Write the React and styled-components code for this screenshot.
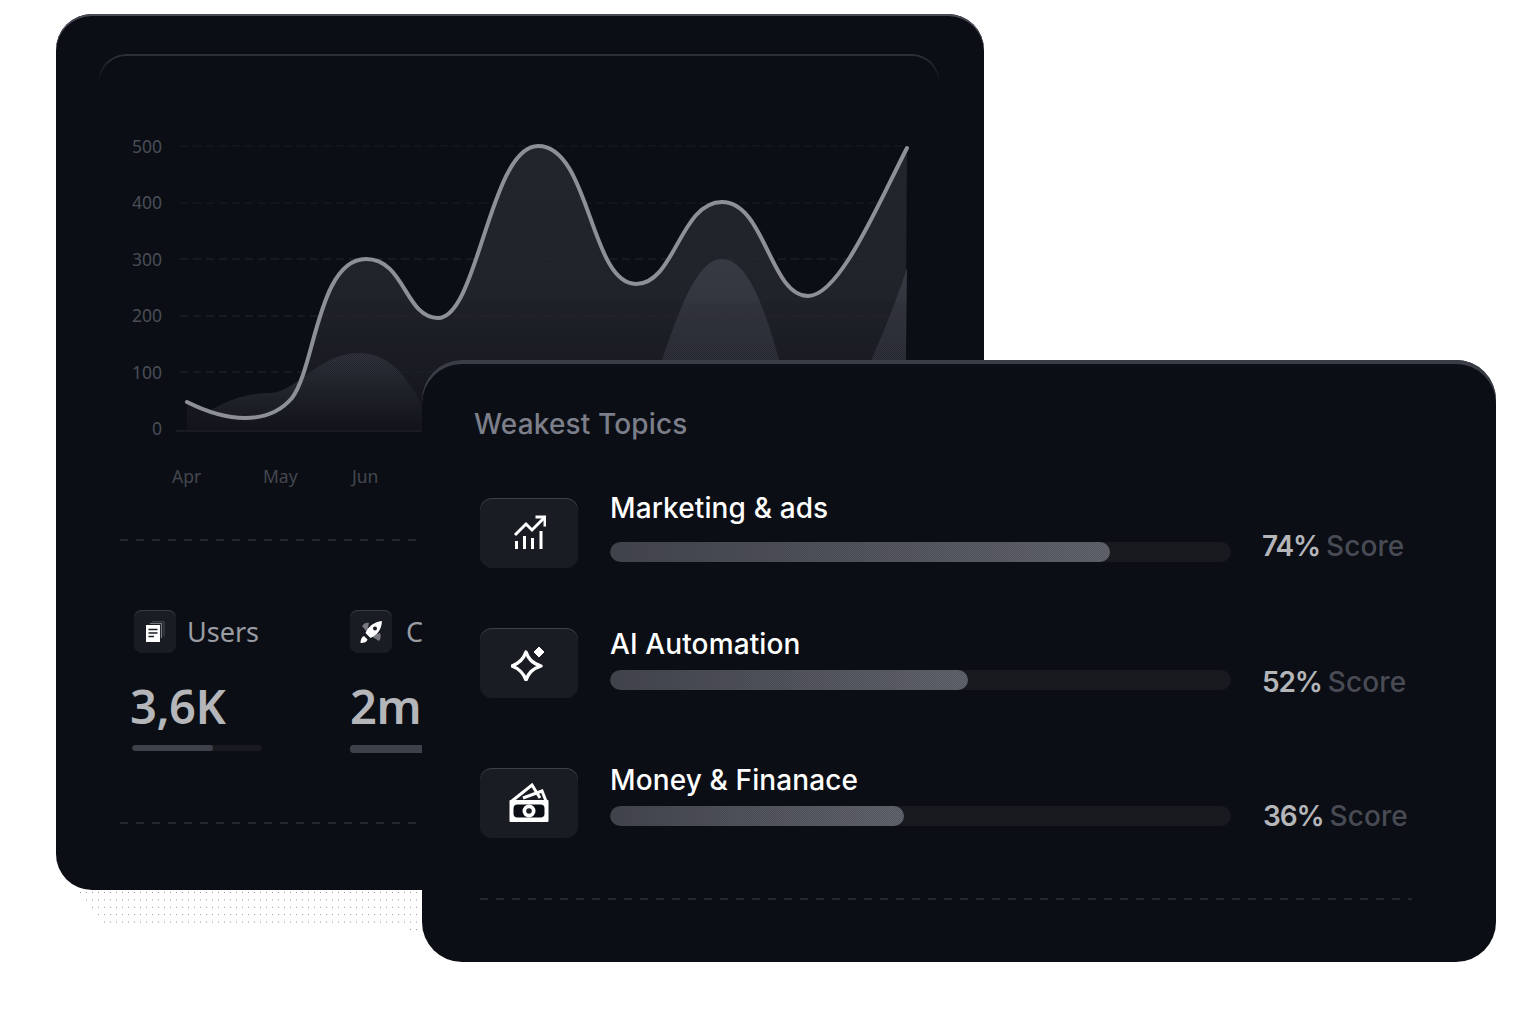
import React from 'react';
import styled, { createGlobalStyle } from 'styled-components';

const GlobalStyle = createGlobalStyle`
  html, body { margin: 0; padding: 0; background: #fff; }
`;

const Stage = styled.div`
  display: grid;
  width: 1536px;
  height: 1012px;
  overflow: hidden;
  background: #fff;
`;

const Dots = styled.div`
  grid-area: 1 / 1;
  width: 340px;
  height: 40px;
  margin: 892px 0 0 78px;
  background-image: radial-gradient(circle at 0.5px 0.5px, #8f9196 0.7px, transparent 0.8px);
  background-size: 6px 7.4px;
  background-position: 2px 0px;
  clip-path: polygon(0 0, 100% 0, 100% 100%, 94% 88%, 92% 78%, 7% 78%, 2% 30%);
`;

const BackCard = styled.section`
  grid-area: 1 / 1;
  box-sizing: border-box;
  width: 928px;
  height: 876px;
  margin: 14px 0 0 56px;
  padding: 40px 44px 0 42px;
  border-radius: 36px;
  background: #0b0e15;
  box-shadow: inset 0 2px 0 #4a4c55;
  font-family: 'Noto Sans', sans-serif;
  overflow: hidden;
`;

const ChartFrame = styled.div`
  position: relative;
  box-sizing: border-box;
  height: 485px;
  padding: 76px 0 0 22px;

  &::before {
    content: '';
    position: absolute;
    inset: 0;
    border: 2px solid #30323a;
    border-bottom: 0;
    border-radius: 28px 28px 0 0;
    mask-image: linear-gradient(#000, transparent 28px);
  }
`;

const Dashed = styled.div`
  height: 2px;
  width: ${(p) => p.$width}px;
  margin: ${(p) => p.$top || 0}px 0 0 ${(p) => p.$left}px;
  background: repeating-linear-gradient(90deg, #24262d 0 8px, transparent 8px 16px);
`;

const Stats = styled.div`
  display: flex;
  gap: 88px;
  height: 281px;
  padding: 69px 0 0 34px;
  box-sizing: border-box;
`;

const Stat = styled.div`
  width: 130px;
  flex: none;
`;

const StatHead = styled.div`
  display: flex;
  align-items: center;
  gap: ${(p) => p.$gap}px;
  margin-left: ${(p) => p.$left}px;
  height: 43px;
`;

const StatIcon = styled.div`
  display: flex;
  flex: none;
  align-items: center;
  justify-content: center;
  width: 42px;
  height: 43px;
  border-radius: 8px;
  background: #1a1c23;
  box-shadow: inset 0 1px 0 #3a3c44;
`;

const StatLabel = styled.span`
  font-size: 27px;
  line-height: 43px;
  color: #9a9ca3;
  white-space: nowrap;
`;

const StatValue = styled.div`
  margin: 21px 0 0 ${(p) => p.$left}px;
  font-size: 47px;
  line-height: 64px;
  font-weight: 600;
  letter-spacing: -0.5px;
  color: #b5b6ba;
  white-space: nowrap;
`;

const StatTrack = styled.div`
  width: ${(p) => p.$width}px;
  height: ${(p) => p.$height}px;
  margin-top: 7px;
  border-radius: 3px;
  background: #181a20;
  overflow: hidden;
`;

const StatFill = styled.div`
  height: 100%;
  border-radius: 3px;
  background: #3f414a;
`;

const FrontCard = styled.section`
  position: relative;
  grid-area: 1 / 1;
  box-sizing: border-box;
  width: 1074px;
  height: 602px;
  margin: 360px 0 0 422px;
  padding: 48px 0 0 52px;
  border-radius: 40px;
  background: #0b0e15;
  box-shadow: inset 0 4px 0 #3b3d46;
  font-family: Inter, sans-serif;
`;

const Title = styled.h2`
  margin: 0 0 51px;
  font-size: 28px;
  line-height: 32px;
  font-weight: 500;
  letter-spacing: 0.15px;
  color: #7c7f89;
`;

const Row = styled.div`
  display: flex;
  height: 136px;
  margin-left: 6px;
`;

const TopicIcon = styled.div`
  display: flex;
  flex: none;
  align-items: center;
  justify-content: center;
  width: 98px;
  height: 70px;
  margin-top: ${(p) => p.$top}px;
  border-radius: 12px;
  background: #1a1c23;
  box-shadow: inset 0 1px 0 #3e4048;
`;

const TopicBody = styled.div`
  flex: none;
  width: 621px;
  margin-left: 32px;
`;

const TopicName = styled.div`
  font-size: 28px;
  line-height: 34px;
  font-weight: 550;
  letter-spacing: 0.12px;
  color: #fff;
`;

const Track = styled.div`
  height: 20px;
  margin-top: ${(p) => p.$top}px;
  border-radius: 10px;
  background: #181a20;
  overflow: hidden;
`;

const Fill = styled.div`
  position: relative;
  height: 100%;
  border-radius: 10px;
  background: linear-gradient(90deg, #44464f, #62646e);

  &::after {
    content: '';
    position: absolute;
    inset: 0;
    background: repeating-conic-gradient(#0c101722 0 25%, transparent 0 50%) 0 0 / 2px 2px;
  }
`;

const Score = styled.div`
  margin: ${(p) => p.$top}px 0 0 ${(p) => p.$left}px;
  font-size: 28px;
  line-height: 34px;
  font-weight: 600;
  letter-spacing: -1.1px;
  color: #b5b6ba;
  white-space: nowrap;
`;

const ScoreWord = styled.span`
  color: #494b54;
  font-weight: 500;
  letter-spacing: 0.1px;
`;

const linePath =
  'M187 402 C205 411 225 418 245 418 C265 418 280 412 292 398 C315 368 318 259 366 259 C405 259 405 318 438 318 C478 318 490 146 538 146 C590 146 590 284 636 284 C675 284 680 202 722 202 C765 202 770 296 808 296 C840 296 880 200 907 148';
const mainArea = `${linePath} L905 431 L187 431 Z`;
const lowArea =
  'M187 425 C215 405 240 393 270 393 C295 393 320 353 358 353 C395 353 412 385 430 420 C470 431 620 431 638 431 C670 340 690 259 722 259 C755 259 775 340 797 431 C815 431 830 431 838 431 C870 365 890 320 907 268 L905 431 L187 431 Z';

const Chart = () => (
  <svg width="800" height="370" viewBox="120 130 800 370" style={{ display: 'block' }}>
    <defs>
      <linearGradient id="mainFill" gradientUnits="userSpaceOnUse" x1="0" y1="146" x2="0" y2="431">
        <stop offset="0" stopColor="#23252d" />
        <stop offset="0.52" stopColor="#21232b" />
        <stop offset="0.75" stopColor="#1c1e25" />
        <stop offset="1" stopColor="#15171d" />
      </linearGradient>
      <linearGradient id="lowFill" gradientUnits="userSpaceOnUse" x1="0" y1="259" x2="0" y2="431">
        <stop offset="0" stopColor="#383a43" />
        <stop offset="0.58" stopColor="#2f313a" />
        <stop offset="1" stopColor="#13151b" />
      </linearGradient>
      <pattern id="dither" width="2" height="2" patternUnits="userSpaceOnUse">
        <rect width="1" height="1" fill="#0b0e15" />
        <rect x="1" y="1" width="1" height="1" fill="#0b0e15" />
      </pattern>
      <linearGradient id="ditherFade" gradientUnits="userSpaceOnUse" x1="0" y1="300" x2="0" y2="431">
        <stop offset="0" stopColor="#000" />
        <stop offset="0.02" stopColor="#222" />
        <stop offset="1" stopColor="#666" />
      </linearGradient>
      <mask id="ditherMask" maskUnits="userSpaceOnUse" x="120" y="130" width="800" height="370">
        <rect x="120" y="130" width="800" height="370" fill="url(#ditherFade)" />
      </mask>
    </defs>
    {[146, 203, 259, 316, 372].map((y) => (
      <line key={y} x1="180" x2="907" y1={y} y2={y} stroke="#16181f" strokeWidth="1.5" strokeDasharray="8 5" />
    ))}
    <path d={mainArea} fill="url(#mainFill)" />
    <path d={lowArea} fill="url(#lowFill)" />
    <path d={mainArea} fill="url(#dither)" mask="url(#ditherMask)" />
    {[259, 316, 372].map((y) => (
      <line key={y} x1="180" x2="907" y1={y} y2={y} stroke="#2c2e35" strokeWidth="1" strokeDasharray="8 5" opacity="0.45" />
    ))}
    <line x1="176" x2="922" y1="431" y2="431" stroke="#1f2128" strokeWidth="1.5" />
    <path d={linePath} fill="none" stroke="#8e9097" strokeWidth="4" strokeLinecap="round" />
    <g fontFamily="'Noto Sans', sans-serif" fontSize="17.5" fill="#4a4d55" textAnchor="end">
      <text x="162" y="153">500</text>
      <text x="162" y="209">400</text>
      <text x="162" y="266">300</text>
      <text x="162" y="322">200</text>
      <text x="162" y="379">100</text>
      <text x="162" y="435">0</text>
    </g>
    <g fontFamily="'Noto Sans', sans-serif" fontSize="17.5" fill="#44474f">
      <text x="172" y="483">Apr</text>
      <text x="263" y="483">May</text>
      <text x="352" y="483">Jun</text>
    </g>
  </svg>
);

const DocIcon = () => (
  <svg width="22" height="22" viewBox="0 0 22 22">
    <path d="M6 2.5H17.5V17" fill="none" stroke="#777981" strokeWidth="1.2" />
    <path d="M8 0.8H20V15" fill="none" stroke="#4a4c54" strokeWidth="1" />
    <rect x="2" y="4" width="14" height="17" fill="#fff" />
    <path d="M4.5 8.5H13.5M4.5 12H13.5M4.5 15.5H10" stroke="#1a1c23" strokeWidth="1.6" />
  </svg>
);

const RocketIcon = () => (
  <svg width="24" height="26" viewBox="0 0 24 26">
    <path d="M3 7 C5 4 8 3 10 4 L8 13 Z" fill="#77797f" />
    <path d="M20 22 C22 20 22 16 21 14 L12 17 Z" fill="#77797f" />
    <path d="M23 2 C15 3 9.5 7 6.5 14 L11.5 19 C18 16 22.5 11 23 2Z" fill="#fff" />
    <circle cx="16" cy="9.5" r="2" fill="#1a1c23" />
    <path d="M5 17 C2.5 18 1.5 21 1.5 24 C5 24 8 23 8.5 20.5Z" fill="#fff" />
  </svg>
);

const TrendIcon = () => (
  <svg width="34" height="36" viewBox="0 0 34 36" fill="none" stroke="#fff" strokeWidth="3">
    <path d="M3 20 L14 9 L20 15 L32 3" />
    <path d="M23.5 2 H33 V11.5" />
    <path d="M4.5 26 V34 M12.5 21 V34 M20.5 23 V34 M29 16 V34" />
  </svg>
);

const SparkIcon = () => (
  <svg width="36" height="36" viewBox="0 0 36 36" fill="none">
    <path
      d="M15 7 C17.5 14 21 18 30 21 C21 24 17.5 28 15 35 C12.5 28 9 24 1 21 C9 18 12.5 14 15 7Z"
      stroke="#fff"
      strokeWidth="3.4"
      strokeLinejoin="round"
    />
    <path d="M28 2 L33 7 L28 12 L23 7Z" fill="#fff" stroke="#fff" strokeWidth="1" strokeLinejoin="round" />
  </svg>
);

const CashIcon = () => (
  <svg width="40" height="40" viewBox="0 0 40 40" fill="none">
    <path d="M3 18 L23 2 L31 15" stroke="#fff" strokeWidth="3" />
    <path d="M14 15 L33 8 L37 18" stroke="#fff" strokeWidth="3" />
    <rect x="0.5" y="17" width="39" height="22" rx="1" fill="#fff" />
    <rect x="4.5" y="21.5" width="31" height="13" rx="4" fill="#0b0e15" />
    <circle cx="20" cy="28" r="6.5" fill="#fff" />
    <circle cx="20" cy="28" r="2.8" fill="#1a1c23" />
  </svg>
);

const topics = [
  { name: 'Marketing & ads', pct: 74, fill: 500, icon: <TrendIcon />, iconTop: 7, barTop: 17, scoreTop: 38, scoreLeft: 31 },
  { name: 'AI Automation', pct: 52, fill: 358, icon: <SparkIcon />, iconTop: 1, barTop: 9, scoreTop: 38, scoreLeft: 31 },
  { name: 'Money & Finanace', pct: 36, fill: 294, icon: <CashIcon />, iconTop: 5, barTop: 9, scoreTop: 36, scoreLeft: 32 },
];

const App = () => (
  <Stage>
    <GlobalStyle />
    <Dots />
    <BackCard>
      <ChartFrame>
        <Chart />
      </ChartFrame>
      <Dashed $left={22} $width={820} />
      <Stats>
        <Stat>
          <StatHead $left={2} $gap={11}>
            <StatIcon>
              <DocIcon />
            </StatIcon>
            <StatLabel>Users</StatLabel>
          </StatHead>
          <StatValue $left={-2}>3,6K</StatValue>
          <StatTrack $width={130} $height={6}>
            <StatFill style={{ width: '62%' }} />
          </StatTrack>
        </Stat>
        <Stat>
          <StatHead $left={0} $gap={14}>
            <StatIcon>
              <RocketIcon />
            </StatIcon>
            <StatLabel>Courses</StatLabel>
          </StatHead>
          <StatValue $left={0}>2m</StatValue>
          <StatTrack $width={130} $height={8}>
            <StatFill style={{ width: '80%' }} />
          </StatTrack>
        </Stat>
      </Stats>
      <Dashed $left={22} $width={820} />
    </BackCard>
    <FrontCard>
      <Title>Weakest Topics</Title>
      {topics.map((t) => (
        <Row key={t.name}>
          <TopicIcon $top={t.iconTop}>{t.icon}</TopicIcon>
          <TopicBody>
            <TopicName>{t.name}</TopicName>
            <Track $top={t.barTop}>
              <Fill style={{ width: t.fill }} />
            </Track>
          </TopicBody>
          <Score $top={t.scoreTop} $left={t.scoreLeft}>
            {t.pct}% <ScoreWord>Score</ScoreWord>
          </Score>
        </Row>
      ))}
      <Dashed $left={6} $width={932} $top={-1} />
    </FrontCard>
  </Stage>
);

export default App;
